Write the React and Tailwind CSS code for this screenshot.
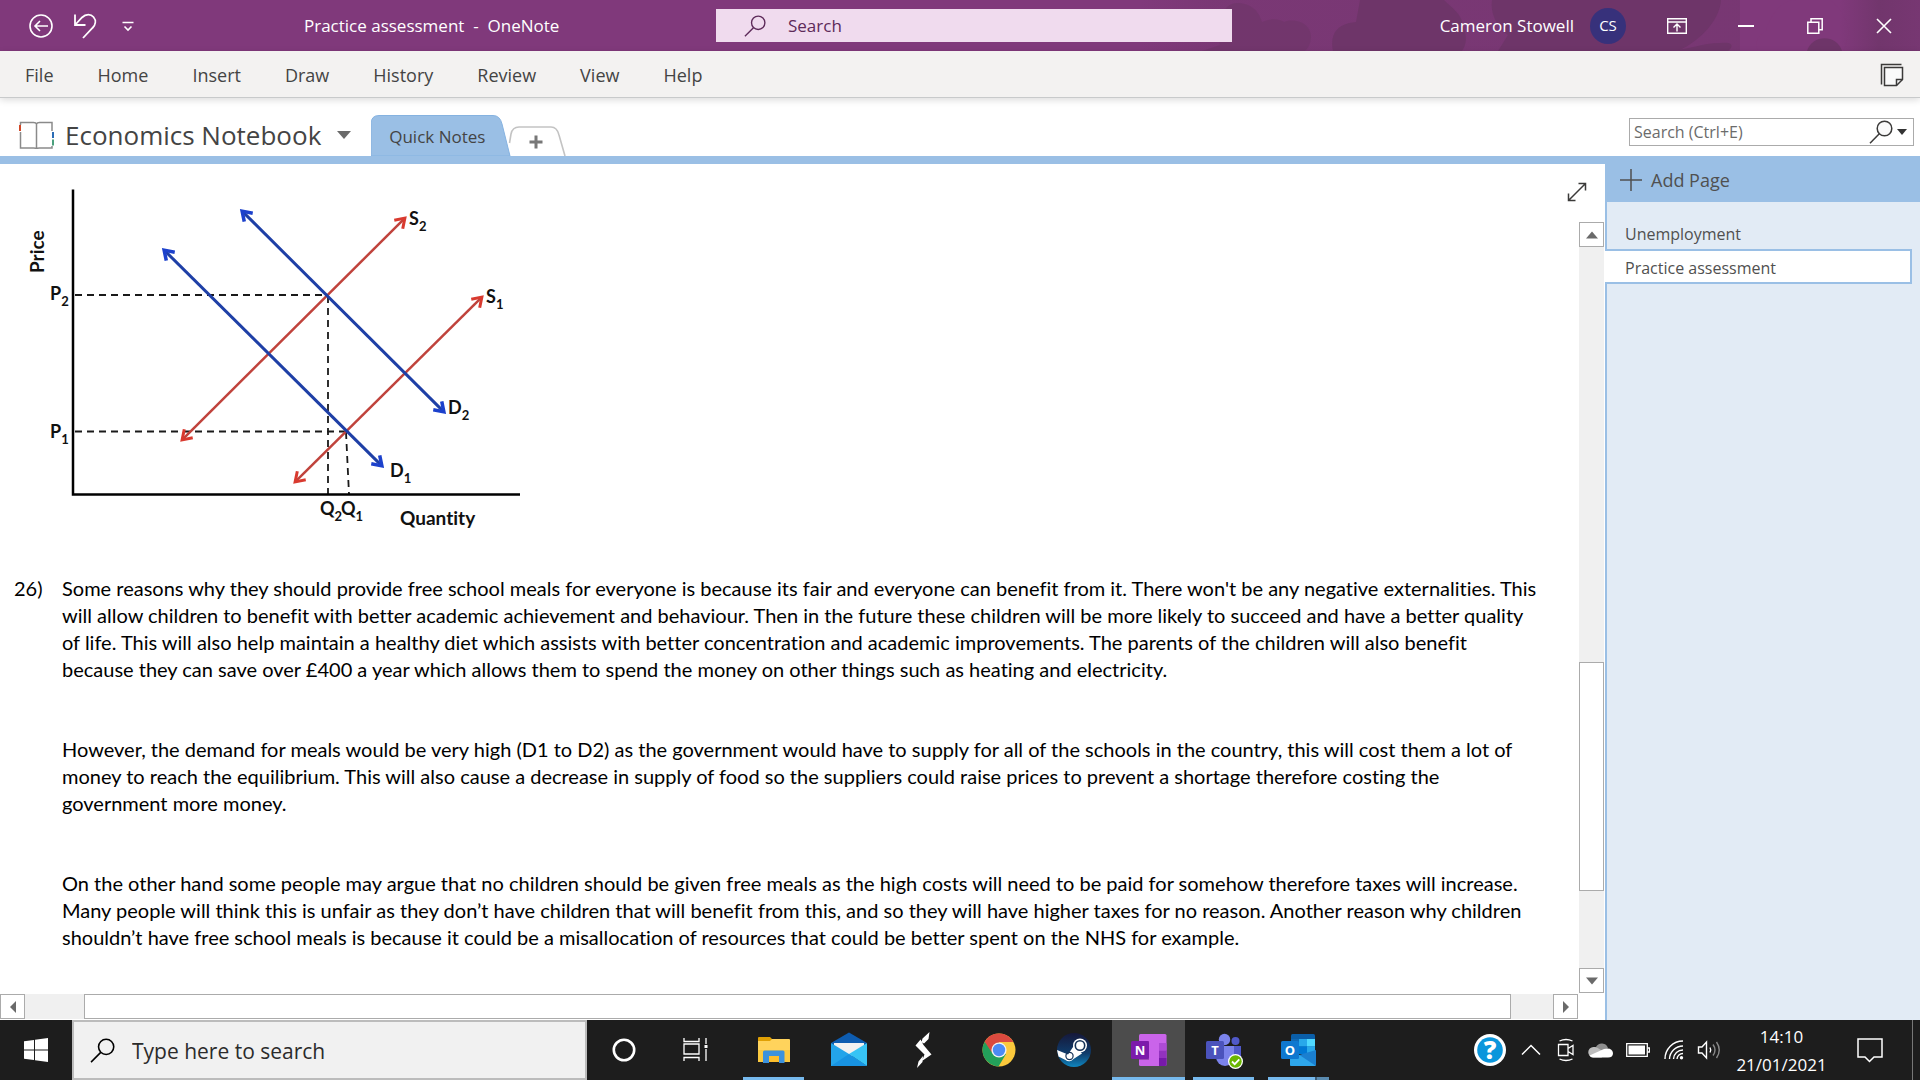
import React from "react";

const menu = ["File", "Home", "Insert", "Draw", "History", "Review", "View", "Help"];

const paragraphs = [
  [
    "Some reasons why they should provide free school meals for everyone is because its fair and everyone can benefit from it. There won't be any negative externalities. This",
    "will allow children to benefit with better academic achievement and behaviour. Then in the future these children will be more likely to succeed and have a better quality",
    "of life. This will also help maintain a healthy diet which assists with better concentration and academic improvements. The parents of the children will also benefit",
    "because they can save over £400 a year which allows them to spend the money on other things such as heating and electricity.",
  ],
  [
    "However, the demand for meals would be very high (D1 to D2) as the government would have to supply for all of the schools in the country, this will cost them a lot of",
    "money to reach the equilibrium. This will also cause a decrease in supply of food so the suppliers could raise prices to prevent a shortage therefore costing the",
    "government more money.",
  ],
  [
    "On the other hand some people may argue that no children should be given free meals as the high costs will need to be paid for somehow therefore taxes will increase.",
    "Many people will think this is unfair as they don’t have children that will benefit from this, and so they will have higher taxes for no reason. Another reason why children",
    "shouldn’t have free school meals is because it could be a misallocation of resources that could be better spent on the NHS for example.",
  ],
];

function Magnifier({ className, sw = 1.5, fill = "none" }) {
  return (
    <svg viewBox="0 0 24 24" className={className} fill="none" stroke="currentColor" strokeWidth={sw} aria-hidden="true">
      <circle cx="15.5" cy="8.5" r="7.3" fill={fill} />
      <path d="M10.3 13.8 1 23.2" />
    </svg>
  );
}

function TitlePattern() {
  return (
    <svg className="absolute right-0 top-0 h-full w-[780px]" viewBox="0 0 780 51" preserveAspectRatio="xMaxYMid slice" aria-hidden="true">
      <defs>
        <linearGradient id="haze" x1="0" x2="1">
          <stop offset="0" stopColor="#6e3569" stopOpacity="0" />
          <stop offset="0.12" stopColor="#6e3569" stopOpacity="0.35" />
          <stop offset="1" stopColor="#6e3569" stopOpacity="0.45" />
        </linearGradient>
        <linearGradient id="edge" x1="0" x2="1">
          <stop offset="0" stopColor="#6e3569" stopOpacity="0" />
          <stop offset="0.5" stopColor="#6e3569" stopOpacity="0.8" />
          <stop offset="1" stopColor="#6e3569" stopOpacity="0.5" />
        </linearGradient>
      </defs>
      <rect x="0" width="600" height="51" fill="url(#haze)" />
      <g fill="#6e3569">
        <path d="M62 51 80 45C76 20 84 3 97 3c15 0 22 9 25 19 9-4 17-3 22 0 10-4 26 0 27 14 0 8-3 12-6 15Z" opacity="0.65" />
        <path d="M193 51c-3-17 3-27 23-29l4-22h84c8 8 18 14 19 26 4 10 4 18-1 25Z" />
        <path d="M352 0c-2 12 4 26 16 35l-10 16h180c24-11 42-32 43-51Z" />
        <path d="M530 51c16-1 33-8 50-8 16-2 12 5 8 8Z" />
      </g>
      <path d="M618 51c-4-8 0-16 8-20 4-16 16-31 30-31h34c13 10 20 24 18 36l-4 15Z" fill="#80397b" />
      <rect x="700" width="80" height="51" fill="url(#edge)" />
      <path d="M667 51c5-17 30-17 35 0Z" fill="#6e3569" />
    </svg>
  );
}

function TitleBar() {
  const win = "flex w-[69px] items-center justify-center";
  return (
    <header className="relative grid h-[51px] grid-cols-[716fr_516fr_688fr] items-center bg-[#80397b] text-[17px] text-white">
      <TitlePattern />
      <div className="relative flex items-center">
        <button aria-label="Back" className="ml-7">
          <svg viewBox="0 0 26 26" className="size-[26px]" fill="none" stroke="currentColor" strokeWidth="1.6">
            <circle cx="13" cy="13" r="11" />
            <path d="M20 13H7M12 8l-5 5 5 5" />
          </svg>
        </button>
        <button aria-label="Undo" className="ml-4">
          <svg viewBox="0 0 28 26" className="h-[26px] w-[28px]" fill="none" stroke="currentColor" strokeWidth="1.8">
            <path d="M5 1.500V12H15.500M5 12 12 4.500C16 .5 21 1 23.500 4c3 3.500 2 8-1 11L13 25" />
          </svg>
        </button>
        <button aria-label="Customize quick access toolbar" className="ml-6">
          <svg viewBox="0 0 12 12" className="size-3" fill="none" stroke="currentColor" strokeWidth="1.6">
            <path d="M.5 2.500h11M2.500 6.500 6 10l3.500-3.500" />
          </svg>
        </button>
        <h1 className="ml-[170px] whitespace-pre">Practice assessment  -  OneNote</h1>
      </div>
      <label className="relative flex h-[33px] items-center bg-[#f0dbee] pl-7 text-[#5d2a59]">
        <Magnifier className="size-[22px]" />
        <input aria-label="Search" placeholder="Search" className="ml-[22px] min-w-0 flex-1 bg-transparent outline-none placeholder:text-[#5d2a59]" />
      </label>
      <div className="relative flex h-full items-center justify-end pr-[2px]">
        <span>Cameron Stowell</span>
        <span className="ml-4 mr-4 flex size-9 items-center justify-center rounded-full bg-[#37317b] text-[15px]">CS</span>
        <button aria-label="Ribbon display options" className={win}>
          <svg viewBox="0 0 20 16" className="h-4 w-5" fill="none" stroke="currentColor" strokeWidth="1.400">
            <path d="M.7.7h18.600v14.600H.7ZM.7 4h18.600M10 13.500V6.500M6.500 9.500 10 6l3.500 3.500" />
          </svg>
        </button>
        <button aria-label="Minimize" className={win}>
          <span className="h-[2px] w-4 bg-white" />
        </button>
        <button aria-label="Restore" className={win}>
          <svg viewBox="0 0 16 16" className="size-4" fill="none" stroke="currentColor" strokeWidth="1.500">
            <path d="M.8 4.200h11v11H.8ZM4 4V.8h11.200v11H12" />
          </svg>
        </button>
        <button aria-label="Close" className={win}>
          <svg viewBox="0 0 16 16" className="size-4" fill="none" stroke="currentColor" strokeWidth="1.600">
            <path d="m1 1 14 14M15 1 1 15" />
          </svg>
        </button>
      </div>
    </header>
  );
}

function Ribbon() {
  return (
    <nav className="relative z-10 flex h-[47px] items-center gap-11 border-b border-[#c8cacb] bg-[#f3f2f1] pl-[25px] pr-4 pt-[2px] text-[18px] text-[#444] shadow-[0_2px_7px_rgba(0,0,0,0.14)]">
      {menu.map((m) => (
        <button key={m}>{m}</button>
      ))}
      <button aria-label="Feed" className="ml-auto">
        <svg viewBox="0 0 24 24" className="size-6" fill="none" stroke="#3b3a39" strokeWidth="1.500">
          <path d="M1.500 21.500v-20h20" />
          <path d="M4.500 4.500h18v12l-6 6h-12Z" fill="#fafafa" />
          <path d="M22.500 16.500h-6v6" />
        </svg>
      </button>
    </nav>
  );
}

function NotebookBar() {
  return (
    <div className="flex h-[66px] items-end border-b-8 border-[#9abfe5] bg-white">
      <button className="flex h-[44px] items-center pl-[19px] pt-[2px] text-[26px] text-[#444]">
        <svg viewBox="0 0 36 28" className="mr-[10px] h-7 w-9" fill="none" stroke="#8a8a8a" strokeWidth="1.500" aria-hidden="true">
          <path d="M1.500 11v16h13q2.500 0 3 .8.5-.8 3-.8h12.500v-2M1.500 4V1.500h13Q17 1.500 17.500 3 18 1.500 20.500 1.500H33V10M17.500 3v24" />
          <path d="M1 4v6" stroke="#d24726" strokeWidth="2" />
          <path d="M34 11v6" stroke="#2b6cb5" strokeWidth="2" />
          <path d="M34 18.500v6" stroke="#4ba07d" strokeWidth="2" />
        </svg>
        Economics Notebook
        <svg viewBox="0 0 14 8" className="ml-4 h-2 w-[14px]" fill="#6a6a6a" aria-hidden="true">
          <path d="M0 0h14L7 8Z" />
        </svg>
      </button>
      <button className="relative ml-5 h-[41px] w-[140px] pr-2 pt-[3px] text-[17px] text-[#444]">
        <svg viewBox="0 0 140 41" className="absolute inset-0 h-full w-full" fill="#9abfe5" aria-hidden="true">
          <path d="M0 41V9Q0 .5 8 .5H122q7 0 9 8.500l8 32Z" stroke="#85b2e0" />
        </svg>
        <span className="relative">Quick Notes</span>
      </button>
      <button aria-label="Create a new section" className="relative -ml-1 h-[30px] w-[60px]">
        <svg viewBox="0 0 60 30" className="h-full w-full" fill="none" aria-hidden="true">
          <path d="M2.500 17 4 8Q5.500 1 12 1H44q6 0 8 8l6 21" stroke="#c3c3c3" strokeWidth="1.600" />
          <path d="M29 9.500v13M22.500 16h13" stroke="#777" strokeWidth="3" />
        </svg>
      </button>
      <label className="mb-[10px] ml-auto mr-[6px] flex h-7 w-[285px] items-center border border-[#ababab] pl-1 pr-[6px] text-[#3b3a39]">
        <input aria-label="Search (Ctrl+E)" placeholder="Search (Ctrl+E)" className="min-w-0 flex-1 text-[16px] outline-none placeholder:text-[#6b6b6b]" />
        <Magnifier className="size-6" fill="#fafafa" />
        <svg viewBox="0 0 10 6" className="ml-1 h-[6px] w-[10px]" fill="#333" aria-hidden="true">
          <path d="M0 0h10L5 6Z" />
        </svg>
      </label>
    </div>
  );
}

function Line({ a, b, color, head, width }) {
  const dx = b[0] - a[0];
  const dy = b[1] - a[1];
  const len = Math.hypot(dx, dy);
  const deg = (Math.atan2(dy, dx) * 180) / Math.PI;
  return (
    <g transform={`translate(${a[0]} ${a[1]}) rotate(${deg})`} fill="none">
      <path d={`M3 0H${len - 3}`} stroke={color} strokeWidth={width} />
      <path d={`M12 -6 3 0 12 6M${len - 12} -6 ${len - 3} 0 ${len - 12} 6`} stroke={head} strokeWidth={width + 0.5} />
    </g>
  );
}

function Sub({ x, y, t, s }) {
  return (
    <text x={x} y={y}>
      {t}
      <tspan dy="6" fontSize="13">{s}</tspan>
    </text>
  );
}

function Chart() {
  return (
    <svg viewBox="0 0 540 411" className="h-[411px] w-[540px]" role="img" aria-label="Supply and demand diagram">
      <g stroke="#1a1a1a" strokeWidth="1.800" strokeDasharray="7 5" fill="none">
        <path d="M75 131H327M75 267.500H346M328 132V330M346 268 349 330" />
      </g>
      <Line a={[180, 278]} b={[407, 52]} color="#c0433c" head="#d93a2f" width={2.5} />
      <Line a={[293, 320]} b={[484, 131]} color="#c0433c" head="#d93a2f" width={2.5} />
      <Line a={[162, 84]} b={[384, 304]} color="#1e3fa6" head="#1c41cc" width={3} />
      <Line a={[240, 45]} b={[446, 250]} color="#1e3fa6" head="#1c41cc" width={3} />
      <path d="M73 25.500V330.500H520" fill="none" stroke="#000" strokeWidth="2.500" />
      <g fontFamily="Lato, sans-serif" fontWeight="700" fontSize="18" fill="#111">
        <text transform="translate(44 109) rotate(-90)" fontSize="19">Price</text>
        <Sub x={50} y={136} t="P" s="2" />
        <Sub x={50} y={274} t="P" s="1" />
        <Sub x={409} y={61} t="S" s="2" />
        <Sub x={486} y={139} t="S" s="1" />
        <Sub x={448} y={250} t="D" s="2" />
        <Sub x={390} y={313} t="D" s="1" />
        <Sub x={320} y={351} t="Q" s="2" />
        <Sub x={341} y={351} t="Q" s="1" />
        <text x="400" y="361" fontSize="19">Quantity</text>
      </g>
    </svg>
  );
}

function ArrowButton({ label, d }) {
  return (
    <button aria-label={label} className="flex size-[25px] shrink-0 items-center justify-center border border-[#ababab] bg-white">
      <svg viewBox="0 0 12 12" className="size-3" fill="#6a6a6a" aria-hidden="true">
        <path d={d} />
      </svg>
    </button>
  );
}

function Canvas() {
  return (
    <main className="flex min-w-0 flex-1 flex-col bg-white">
      <div className="relative flex flex-1">
        <article className="min-w-0 flex-1 font-[Lato,sans-serif] text-[20px] leading-[27px] text-black [font-variant-ligatures:none]">
          <Chart />
          <div className="flex pl-[14px]">
            <span className="w-12 shrink-0">26)</span>
            <div className="flex flex-col gap-[53px]">
              {paragraphs.map((p, i) => (
                <p key={i}>
                  {p.map((l) => (
                    <span key={l} className="block whitespace-nowrap">{l}</span>
                  ))}
                </p>
              ))}
            </div>
          </div>
        </article>
        <div className="flex w-[26px] flex-col pt-[58px]">
          <ArrowButton label="Scroll up" d="M0 9.500h12L6 2.500Z" />
          <div className="flex w-[25px] flex-1 flex-col bg-[#f0f0f0]">
            <div className="grow-[416]" />
            <div className="grow-[228] border border-[#ababab] bg-white" />
            <div className="grow-[77]" />
          </div>
          <ArrowButton label="Scroll down" d="M0 2.500h12L6 9.500Z" />
        </div>
        <button aria-label="Full page view" className="absolute right-[18px] top-[18px]">
          <svg viewBox="0 0 20 20" className="size-5" fill="none" stroke="#3b3a39" strokeWidth="1.500">
            <path d="M1.500 18.500l17-17M11.500 1.500h7v7M1.500 11.500v7h7" />
          </svg>
        </button>
      </div>
      <div className="flex pb-px pr-[27px] pt-px">
        <ArrowButton label="Scroll left" d="M9 0v12L3 6Z" />
        <div className="flex flex-1 bg-[#f0f0f0]">
          <div className="grow-[59]" />
          <div className="grow-[1427] border border-[#ababab] bg-white" />
          <div className="grow-[42]" />
        </div>
        <ArrowButton label="Scroll right" d="M3 0v12l6-6Z" />
      </div>
    </main>
  );
}

function Pages() {
  return (
    <aside className="w-[315px] shrink-0 border-l-2 border-[#9abfe5] bg-[#e2ebf5] text-[16px] text-[#505050]">
      <button className="flex h-[38px] w-full items-center bg-[#9abfe5] pb-[6px] pl-[13px] text-[18px]">
        <svg viewBox="0 0 22 22" className="mr-[9px] size-[22px]" fill="none" stroke="#505050" strokeWidth="1.500" aria-hidden="true">
          <path d="M11 0v22M0 11h22" />
        </svg>
        Add Page
      </button>
      <ul className="mt-[15px]">
        <li>
          <button className="flex h-8 w-full items-center pl-[18px] pt-[2px]">Unemployment</button>
        </li>
        <li>
          <button aria-current="page" className="-ml-[2px] flex h-[35px] w-[307px] items-center border-y-2 border-r-2 border-[#9abfe5] bg-white pl-5 pt-[2px]">Practice assessment</button>
        </li>
      </ul>
    </aside>
  );
}

const letter = { fontFamily: "Open Sans, sans-serif", fontWeight: 700, fontSize: 13, fill: "#fff", textAnchor: "middle" };

const apps = [
  { name: "Cortana", icon: <circle cx="18" cy="18" r="10.200" fill="none" stroke="#fff" strokeWidth="2.600" /> },
  {
    name: "Task View",
    icon: (
      <g fill="none" stroke="#fff" strokeWidth="1.300">
        <path d="M3 6v3.500h15V6M3 12h15v10H3ZM3 29v-3.500h15V29M25 6v6M25 17v12" />
        <path d="M23.500 13h3v3h-3Z" fill="#fff" stroke="none" />
      </g>
    ),
  },
  {
    name: "File Explorer",
    bar: "w-[61px]",
    icon: (
      <g>
        <path d="M2 6q0-1 1-1h11l2 2v6H2Z" fill="#e0a005" />
        <path d="M2 9h12l2-2h17q1 0 1 1v22H2Z" fill="#ffd35c" />
        <path d="M2 18h32v12H2Z" fill="#fbc93f" />
        <path d="M7 31V20q0-1.500 1.500-1.500h18.500q1.500 0 1.500 1.500V31H23v-7H13v7Z" fill="#3c92dd" />
        <path d="M13 24h10v6H13Z" fill="#fdbf2d" />
      </g>
    ),
  },
  {
    name: "Mail",
    icon: (
      <g>
        <path d="M0 11 18 0.500 36 11l-18 13Z" fill="#0d5cb0" />
        <path d="M3 11h30v8L18 25 3 19Z" fill="#f1f1f1" />
        <path d="M0 11 18 22 36 34H0Z" fill="#23a4ea" />
        <path d="M36 11 18 22 36 34Z" fill="#37c4f5" />
        <path d="M0 34 18 22l18 12Z" fill="#1893e2" />
      </g>
    ),
  },
  {
    name: "S",
    icon: <path d="M23.500 0 16.500 6.500 15.500 10 18 11.500 22.500 7ZM14.500 7.500 9.500 13.500l9 9-2.500 6.500L25.500 22.500 17.500 13ZM17 24l-4.500 5.500-1.500 6.500 5.500-6Z" fill="#fff" />,
  },
  {
    name: "Chrome",
    icon: (
      <g>
        <circle cx="18" cy="18" r="16.500" fill="#fbc93c" />
        <path d="M18 18 3.700 9.750A16.500 16.500 0 0 0 17.500 34.500L25 22Z" fill="#23a05a" />
        <path d="M18 18 3.700 9.750A16.500 16.500 0 0 1 32.400 10H18Z" fill="#db4a3f" />
        <path d="M3.700 9.750 10.500 20 18 10Z" fill="#db4a3f" />
        <circle cx="18" cy="18" r="7.600" fill="#f2f2f2" />
        <circle cx="18" cy="18" r="6.200" fill="#4c8bf5" />
      </g>
    ),
  },
  {
    name: "Steam",
    icon: (
      <g>
        <defs>
          <linearGradient id="steam" x1="0" y1="0" x2="0" y2="1">
            <stop offset="0" stopColor="#16183a" />
            <stop offset="0.600" stopColor="#0f3c6b" />
            <stop offset="1" stopColor="#0f86bf" />
          </linearGradient>
        </defs>
        <circle cx="18" cy="18" r="17" fill="url(#steam)" />
        <path d="m1 18 11 4.500 6-9 8 8-8.500 5.500a5.500 5.500 0 0 1-8 1L2.500 24.500Z" fill="#fff" />
        <circle cx="24" cy="13.500" r="7" fill="#fff" />
        <circle cx="24" cy="13.500" r="4.700" fill="none" stroke="#153257" strokeWidth="1.600" />
        <circle cx="13.500" cy="24" r="3.600" fill="none" stroke="#153257" strokeWidth="1.200" />
      </g>
    ),
  },
  {
    name: "OneNote",
    active: true,
    bar: "w-full",
    icon: (
      <g>
        <rect x="8" y="2" width="27.500" height="32" rx="1.500" fill="#ca64ea" />
        <path d="M28 11h7.500v7.500H28Z" fill="#ae4bd5" />
        <path d="M28 18.500h7.500V26H28Z" fill="#9332bf" />
        <path d="M28 26h7.500v6.500q0 1.500-1.500 1.500H28Z" fill="#7719aa" />
        <path d="M8 9h10v19H8Z" fill="#9a49b4" />
        <rect x="0" y="9" width="18" height="18" rx="1.500" fill="#7c1bab" />
        <text x="9" y="23" {...letter}>N</text>
      </g>
    ),
  },
  {
    name: "Teams",
    bar: "w-[61px]",
    icon: (
      <g>
        <circle cx="18.500" cy="7.500" r="5.700" fill="#7b83eb" />
        <circle cx="29.500" cy="9" r="4" fill="#5059c9" />
        <path d="M25 14h10v10a7 7 0 0 1-9 6Z" fill="#5059c9" />
        <path d="M10 14h18v11a9 9 0 0 1-18 0Z" fill="#7b83eb" />
        <rect x="0" y="9" width="18" height="18" rx="1.500" fill="#4b53bc" />
        <text x="9" y="23" {...letter}>T</text>
        <circle cx="29.500" cy="29.500" r="7.500" fill="#fff" />
        <circle cx="29.500" cy="29.500" r="6.200" fill="#6bb700" />
        <path d="m26 29.500 2.700 2.700 4.600-4.800" fill="none" stroke="#fff" strokeWidth="1.800" />
      </g>
    ),
  },
  {
    name: "Outlook",
    bar: "w-[61px]",
    icon: (
      <g>
        <rect x="10" y="2" width="24" height="20" rx="1.500" fill="#0a5ea8" />
        <path d="M10 7h8v7.500h-8Z" fill="#1069b5" />
        <path d="M18 7h8v7.500h-8Z" fill="#28a8ea" />
        <path d="M26 7h8v7.500h-8Z" fill="#50d9ff" />
        <path d="M18 14.500h8V22h-8Z" fill="#0078d4" />
        <path d="M26 14.500h8V22h-8Z" fill="#28a8ea" />
        <path d="M35 18v14.500q0 1.500-1.500 1.500h-23Q9 34 9 32.500V24l9-1Z" fill="#1a7fd0" />
        <path d="M35 34 17 22l-8 2v8.500Q9 34 10.500 34Z" fill="#2ea6ea" />
        <rect x="0" y="9" width="18" height="18" rx="1.500" fill="#0f78d0" />
        <text x="9" y="23" {...letter}>O</text>
      </g>
    ),
  },
];

function Tray() {
  return (
    <div className="ml-auto flex items-center text-white">
      <button aria-label="Help">
        <svg viewBox="0 0 34 34" className="size-[34px]">
          <circle cx="17" cy="17" r="16" fill="#fff" />
          <circle cx="17" cy="17" r="12.800" fill="#0a96dc" />
          <text x="17" y="26" fontFamily="Open Sans, sans-serif" fontWeight="800" fontSize="25" fill="#fff" textAnchor="middle">?</text>
        </svg>
      </button>
      <button aria-label="Show hidden icons" className="ml-[14px]">
        <svg viewBox="0 0 20 12" className="h-3 w-5" fill="none" stroke="currentColor" strokeWidth="1.500">
          <path d="m1 10.500 9-9 9 9" />
        </svg>
      </button>
      <button aria-label="Meet Now" className="ml-4">
        <svg viewBox="0 0 18 24" className="h-6 w-[18px]" fill="none" stroke="currentColor" strokeWidth="1.300">
          <path d="M2.500 3q6.500-3 13 0M2.500 21q6.500 3 13 0M1.500 6.500h9.500v11H1.500ZM11 10.500l5-3v9l-5-3" />
        </svg>
      </button>
      <button aria-label="OneDrive" className="ml-[13px]">
        <svg viewBox="0 0 26 18" className="h-[18px] w-[26px]">
          <path d="M8 6a6.500 6.500 0 0 1 12 1l-8 5-8-5Z" fill="#8f8f8f" />
          <path d="M5.500 16.500a5.200 5.200 0 0 1 0-10.500q3-.5 5 1.500l8 5-5 4Z" fill="#bdbdbd" />
          <path d="M5 16.500q-2.500 0-3.500-2L16 8q8-2 9 4 0 4.500-5 4.500Z" fill="#fff" />
        </svg>
      </button>
      <button aria-label="Battery" className="ml-3">
        <svg viewBox="0 0 24 14" className="h-[14px] w-6">
          <path d="M.7.7h20.600v12.600H.7ZM22 5h1.500v4H22" fill="none" stroke="#fff" strokeWidth="1.300" />
          <path d="M2.500 2.500h16.500v9H2.500Z" fill="#fff" />
        </svg>
      </button>
      <button aria-label="Network" className="ml-[14px]">
        <svg viewBox="0 0 20 20" className="size-5" fill="none" stroke="currentColor" strokeWidth="1.400">
          <path d="M1 19A18 18 0 0 1 19 1" />
          <path d="M5.500 19A13.500 13.500 0 0 1 19 6" />
          <path d="M9.500 19A9.500 9.500 0 0 1 19 10" />
          <path d="M13 19a6 6 0 0 1 6-5.500" />
          <circle cx="17.500" cy="17.800" r="1.700" fill="currentColor" stroke="none" />
        </svg>
      </button>
      <button aria-label="Volume" className="ml-[13px]">
        <svg viewBox="0 0 24 20" className="h-5 w-6" fill="none" stroke="currentColor" strokeWidth="1.400">
          <path d="M1.500 7h3.500l4.500-5v16L5 13H1.500Z" />
          <path d="M13 7.500q1.500 2.500 0 5" />
          <path d="M16 4.500q4 5.500 0 11M19.500 2q5.500 8 0 16" stroke="#888" />
        </svg>
      </button>
      <button className="ml-3 w-[97px] pt-px text-center text-[17px] leading-7">
        14:10
        <br />
        21/01/2021
      </button>
      <button aria-label="Notifications" className="ml-[27px]">
        <svg viewBox="0 0 26 26" className="size-[26px]" fill="none" stroke="currentColor" strokeWidth="1.500">
          <path d="M1 2h24v18H17l-4.500 4.500L8 20H1Z" />
        </svg>
      </button>
      <span className="ml-[29px] mr-[7px] h-[60px] w-px bg-[#777]" />
    </div>
  );
}

function Taskbar() {
  return (
    <footer className="flex h-[60px] items-center bg-[#1d1d1d]">
      <button aria-label="Start" className="flex h-full w-[72px] items-center justify-center">
        <svg viewBox="0 0 24 24" className="size-6" fill="#fff">
          <path d="M0 3.300 10 1.900v9.500H0ZM11 1.700 24 0v11.400H11ZM0 12.400h10v9.600L0 20.700ZM11 12.400h13V24l-13-1.800Z" />
        </svg>
      </button>
      <label className="flex h-full w-[515px] items-center border-2 border-[#bcbcbc] bg-[#f1f1f1] pl-4 text-black">
        <Magnifier className="size-[25px]" />
        <input aria-label="Type here to search" placeholder="Type here to search" className="ml-[17px] min-w-0 flex-1 bg-transparent pt-1 text-[21px] outline-none placeholder:text-[#2b2b2b]" />
      </label>
      <nav className="flex h-full gap-[2px]">
        {apps.map((a) => (
          <button key={a.name} aria-label={a.name} className={`relative flex h-full w-[73px] items-center justify-center ${a.active ? "bg-[#4c4c4c]" : ""}`}>
            <svg viewBox="0 0 36 36" className="size-9 overflow-visible">{a.icon}</svg>
            {a.bar && (
              <span className={`absolute bottom-0 flex h-[3px] justify-end bg-[#76b9ed] ${a.bar}`}>
                {a.name === "Outlook" && <span className="w-[14px] border-l-2 border-[#3d5c75] bg-[#5a8bb0]" />}
              </span>
            )}
          </button>
        ))}
      </nav>
      <Tray />
    </footer>
  );
}

export default function App() {
  return (
    <div className="flex min-h-screen flex-col overflow-x-hidden bg-white font-['Open_Sans',sans-serif]">
      <TitleBar />
      <Ribbon />
      <NotebookBar />
      <div className="flex flex-1">
        <Canvas />
        <Pages />
      </div>
      <Taskbar />
    </div>
  );
}
